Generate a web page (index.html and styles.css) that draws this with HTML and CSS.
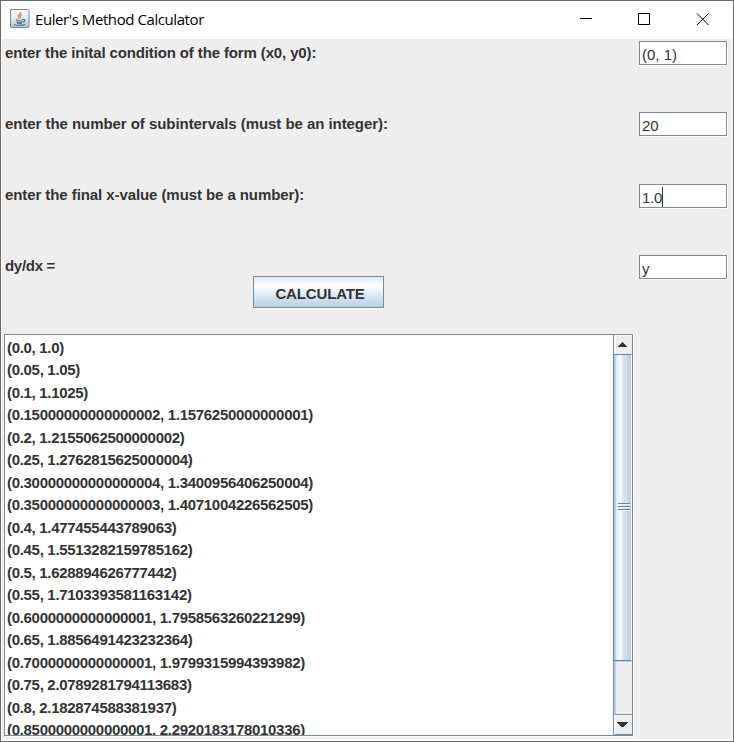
FILE: index.html
```html
<!DOCTYPE html>
<html lang="en">
<head>
<meta charset="utf-8">
<title>Euler's Method Calculator</title>
<link rel="stylesheet" href="styles.css">
</head>
<body>
<div class="window">
  <header class="titlebar">
    <svg class="app-icon" width="20" height="20" viewBox="0 0 20 20" fill="none">
      <defs><linearGradient id="tile" x2="0" y2="1"><stop stop-color="#fbfcfd"/><stop offset=".5" stop-color="#e6ebef"/><stop offset="1" stop-color="#b5c3cf"/></linearGradient></defs>
      <rect x=".5" y=".5" width="18.500" height="18" rx="1.500" fill="url(#tile)" stroke="#71889c"/>
      <path d="M10.500 3c1 2-3.300 3-2 5l1 2M12 5.500c-2 1-2.500 2-1 3.300" stroke="#e38c4c" stroke-width="1.400"/>
      <path d="M6 10.500c1.500 1 5 1 7 0M6.500 12.500c1.500 1 4 1 6 0M7 14c1.500.8 3.500.8 5 0M13 10.500c3-.5 2.500 2-.2 2.700M4.500 15c-1 1.800 8.500 2 10.500.2" stroke="#53789a" stroke-width="1.200"/>
    </svg>
    <h1 class="title">Euler's Method Calculator</h1>
    <svg class="controls" width="130" height="14" viewBox="0 0 130 14" fill="none" stroke="#000" shape-rendering="crispEdges">
      <path d="M0 6.500h12"/><rect x="58.500" y="1.500" width="11" height="11"/><path shape-rendering="auto" d="M117 1.500l11.500 11.500M128.500 1.500l-11.500 11.500"/>
    </svg>
  </header>
  <main class="content">
    <form class="form">
      <div class="row"><span class="label l1">enter the inital condition of the form (x0, y0):</span><span class="field">(0, 1)</span></div>
      <div class="row"><span class="label l2">enter the number of subintervals (must be an integer):</span><span class="field">20</span></div>
      <div class="row row-late"><span class="label l3">enter the final x-value (must be a number):</span><span class="field">1.0<i class="caret"></i></span></div>
      <div class="row row-last"><span class="label l4">dy/dx =</span><span class="field">y</span></div>
    </form>
    <button class="calculate" type="button">CALCULATE</button>
    <section class="results">
      <ul class="list">
        <li>(0.0, 1.0)</li>
        <li>(0.05, 1.05)</li>
        <li>(0.1, 1.1025)</li>
        <li>(0.15000000000000002, 1.1576250000000001)</li>
        <li>(0.2, 1.2155062500000002)</li>
        <li>(0.25, 1.2762815625000004)</li>
        <li>(0.30000000000000004, 1.3400956406250004)</li>
        <li>(0.35000000000000003, 1.4071004226562505)</li>
        <li>(0.4, 1.477455443789063)</li>
        <li>(0.45, 1.5513282159785162)</li>
        <li>(0.5, 1.628894626777442)</li>
        <li>(0.55, 1.7103393581163142)</li>
        <li>(0.6000000000000001, 1.7958563260221299)</li>
        <li>(0.65, 1.8856491423232364)</li>
        <li>(0.7000000000000001, 1.9799315994393982)</li>
        <li>(0.75, 2.0789281794113683)</li>
        <li>(0.8, 2.182874588381937)</li>
        <li>(0.8500000000000001, 2.2920183178010336)</li>
      </ul>
      <div class="scrollbar">
        <div class="arrow up"><svg width="11" height="6" viewBox="0 0 11 6" shape-rendering="crispEdges"><path d="M5 0h1v1h1v1h1v1h1v1h1v1H1V4h1V3h1V2h1V1h1z" fill="#333"/></svg></div>
        <div class="thumb"><div class="grip"><i></i><i></i><i></i></div></div>
        <div class="track"></div>
        <div class="arrow down"><svg width="11" height="6" viewBox="0 0 11 6" shape-rendering="crispEdges"><path d="M0 0h11v1h-1v1H9v1H8v1H7v1H4V4H3V3H2V2H1V1H0z" fill="#333"/></svg></div>
      </div>
    </section>
  </main>
</div>
</body>
</html>
```
FILE: styles.css
```css
* { box-sizing: border-box; }
body { margin: 0; width: 734px; height: 742px; overflow: hidden; }
.window {
  height: 742px;
  border: 1px solid #6c6a6c;
  background: #fff;
  display: flex;
  flex-direction: column;
}
.titlebar { height: 38px; display: flex; align-items: center; padding: 0 23px 0 9px; flex: none; }
.app-icon { margin-right: 5px; margin-top: -3px; }
.title { margin: -2px 0 0; font: 400 15px/20px "Open Sans", sans-serif; letter-spacing: -0.42px; color: #000; }
.controls { margin-left: auto; margin-top: -2px; }
.content {
  height: 700px;
  margin: 0 1px 0 1px;
  padding: 2px 5px 0 2px;
  background: #eee;
  color: #333;
  font-family: "Liberation Sans", Arial, sans-serif;
}
.form { height: 235px; }
.row { height: 71px; display: flex; justify-content: space-between; align-items: flex-start; }
.row-late { padding-top: 1px; }
.row-last { height: 22px; padding-top: 1px; }
.label { font-size: 15px; font-weight: 700; line-height: 20px; margin-top: 2px; margin-left: 1px; white-space: pre; }
.l1 { letter-spacing: -0.13px; }
.l2 { letter-spacing: -0.055px; }
.l3 { letter-spacing: -0.08px; }
.l4 { letter-spacing: -0.3px; }
.row-late .label, .row-last .label { margin-top: 1px; }
.field {
  width: 88px;
  height: 24px;
  display: flex;
  padding: 3px 0 0 2px;
  border: 1px solid #7a8a99;
  background: #fff;
  box-shadow: 0 1px #fff, 1px 0 #fff;
  font-size: 15px;
  line-height: 20px;
}
.row-late .field { letter-spacing: -0.2px; }
.caret { width: 1px; height: 20px; margin-top: -1px; background: #333; }
.calculate {
  display: block;
  width: 131px;
  height: 32px;
  margin: 0 0 0 249px;
  padding: 4px 0 0 3px;
  border: 1px solid #7a8a99;
  background: linear-gradient(#dde8f3 0%, #fff 30%, #dde8f3 60%, #b8cfe5 100%);
  box-shadow: 0 1px #fff;
  color: #333;
  font: 700 15px/20px "Liberation Sans", Arial, sans-serif;
  letter-spacing: -0.15px;
}
.results {
  display: flex;
  width: 629px;
  height: 402px;
  margin-top: 26px;
  border: 1px solid #7a8a99;
  background: #fff;
  box-shadow: 1px 1px #fff;
}
.list {
  flex: 1;
  margin: 0;
  padding: 1.85px 0 0 2px;
  overflow: hidden;
  list-style: none;
  font-size: 15px;
  font-weight: 700;
  letter-spacing: -0.31px;
  line-height: 22px;
}
.list li { height: 22.5px; white-space: nowrap; }
.scrollbar { width: 19px; border-left: 1px solid #7a8a99; display: flex; flex-direction: column; background: #eee; }
.arrow { display: flex; align-items: center; justify-content: center; border-top: 1px solid #fff; border-left: 1px solid #fff; }
.up { height: 19px; padding-right: 2px; }
.down { height: 20px; padding-right: 2px; border-bottom: 1px solid #7a8a99; }
.thumb {
  height: 307px;
  margin-left: -1px;
  border: 1px solid #6382bf;
  border-right-color: #fff;
  background: linear-gradient(90deg, #b8cfe5 0 2px, #dde8f3 2px, #fff 7px, #dde8f3 8px, #b8cfe5 17px);
  display: flex;
  align-items: center;
  justify-content: center;
}
.grip { display: flex; flex-direction: column; gap: 1px; margin: -2px 0 0 2px; }
.grip i { width: 12px; height: 2px; border-top: 1px solid #6382bf; background: #fff; }
.track { flex: 1; border-left: 2px solid #b8cfe5; border-top: 1px solid #b8cfe5; border-bottom: 1px solid #7a8a99; }
```
